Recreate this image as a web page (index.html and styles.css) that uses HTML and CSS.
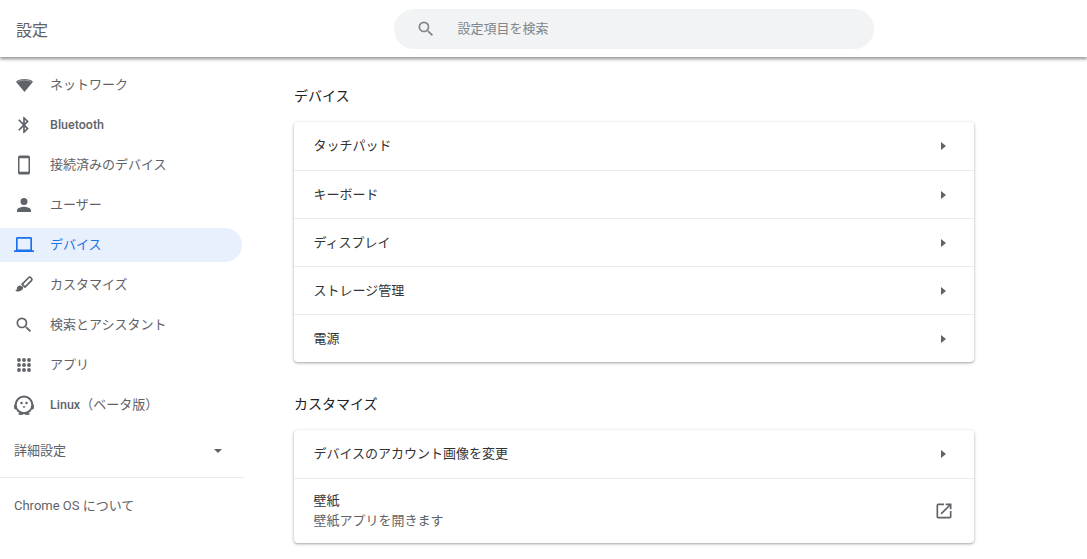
FILE: index.html
```html
<!DOCTYPE html>
<html lang="ja">
<head>
<meta charset="utf-8">
<title>設定</title>
<link rel="stylesheet" href="styles.css">
</head>
<body>
<header class="topbar">
  <h1 class="app-title">設定</h1>
  <div class="search">
    <svg class="search-icon" viewBox="0 0 24 24"><path d="M15.5 14h-.79l-.28-.27A6.47 6.47 0 0 0 16 9.5 6.5 6.5 0 1 0 9.5 16c1.61 0 3.09-.59 4.23-1.57l.27.28v.79l5 4.99L20.49 19l-4.99-5zm-6 0C7.01 14 5 11.99 5 9.5S7.01 5 9.5 5 14 7.01 14 9.5 11.99 14 9.500 14z"/></svg>
    <span class="search-text">設定項目を検索</span>
  </div>
</header>
<div class="layout">
  <nav class="sidebar">
    <a class="nav-item"><svg class="nav-icon" viewBox="0 0 24 24"><path d="M12.600 20.400 22.800 8C21 6 17 4.800 12.600 4.800S4.200 6 2.400 8z"/><path class="sheen" d="M4.500 8.200C6.500 6.900 9.500 6.200 12.600 6.200s6.100.7 8.100 2"/></svg><span>ネットワーク</span></a>
    <a class="nav-item"><svg class="nav-icon" viewBox="0 0 24 24"><path d="M17.710 7.710 12 2h-1v7.590L6.410 5 5 6.410 10.590 12 5 17.590 6.410 19 11 14.410V22h1l5.710-5.710-4.300-4.290 4.300-4.290zM13 5.830l1.880 1.880L13 9.590V5.830zm1.880 10.460L13 18.170v-3.760l1.880 1.880z"/></svg><span class="latin">Bluetooth</span></a>
    <a class="nav-item"><svg class="nav-icon" viewBox="0 0 24 24"><path fill-rule="evenodd" d="M7 .6h10a2.200 2.200 0 0 1 2.200 2.200v18.400a2.200 2.200 0 0 1-2.200 2.200H7a2.200 2.200 0 0 1-2.200-2.200V2.800A2.200 2.200 0 0 1 7 .6zM6.600 4v16h10.800V4z"/></svg><span>接続済みのデバイス</span></a>
    <a class="nav-item"><svg class="nav-icon" viewBox="0 0 24 24"><path d="M12 12a4.200 4.200 0 1 0 0-8.400 4.200 4.200 0 0 0 0 8.400zm0 2c-2.800 0-8.400 1.400-8.400 4.200v2.200h16.800v-2.200c0-2.800-5.600-4.200-8.400-4.200z"/></svg><span>ユーザー</span></a>
    <a class="nav-item active"><svg class="nav-icon" viewBox="0 0 24 24"><path fill-rule="evenodd" d="M4 2.400h16a1.600 1.600 0 0 1 1.600 1.600v14.400H24v2H0v-2h2.400V4A1.600 1.600 0 0 1 4 2.400zM4.400 4.400v13h15.200v-13z"/></svg><span>デバイス</span></a>
    <a class="nav-item"><svg class="nav-icon" viewBox="0 0 24 24"><path d="M7.500 12.500c-2.500 0-4 1.600-4 3.600 0 1.500-1.200 2.400-2.300 2.800 2 1 5 1.100 7 .1 2.200-1.100 3.300-3.400 2.700-5z"/><path class="outline" d="M9.800 11 17.500 3.300a2 2 0 0 1 2.800 0l.6.6a2 2 0 0 1 0 2.800l-7.700 7.700z"/></svg><span>カスタマイズ</span></a>
    <a class="nav-item"><svg class="nav-icon" viewBox="0 0 24 24"><path d="M15.500 14h-.79l-.28-.27A6.470 6.470 0 0 0 16 9.500 6.500 6.500 0 1 0 9.500 16c1.610 0 3.090-.59 4.230-1.570l.27.28v.79l5 4.990L20.490 19l-4.990-5zm-6 0C7.010 14 5 11.990 5 9.500S7.010 5 9.500 5 14 7.010 14 9.500 11.990 14 9.500 14z"/></svg><span>検索とアシスタント</span></a>
    <a class="nav-item"><svg class="nav-icon" viewBox="0 0 24 24"><circle cx="6" cy="6" r="2.300"/><circle cx="12" cy="6" r="2.300"/><circle cx="18" cy="6" r="2.300"/><circle cx="6" cy="12" r="2.300"/><circle cx="12" cy="12" r="2.300"/><circle cx="18" cy="12" r="2.300"/><circle cx="6" cy="18" r="2.300"/><circle cx="12" cy="18" r="2.300"/><circle cx="18" cy="18" r="2.300"/></svg><span>アプリ</span></a>
    <a class="nav-item"><svg class="nav-icon tux" viewBox="0 0 24 24"><ellipse cx="1.800" cy="14" rx="1.800" ry="3.400"/><ellipse cx="22.200" cy="14" rx="1.800" ry="3.400"/><ellipse cx="8" cy="22.800" rx="3" ry="1.300"/><ellipse cx="16" cy="22.800" rx="3" ry="1.300"/><circle class="ring" cx="12" cy="11.800" r="10"/><circle cx="9" cy="9.600" r="1.500"/><circle cx="15" cy="9.600" r="1.500"/><path d="M10 13.500h4l-2 2.300z"/></svg><span><span class="latin">Linux</span>（ベータ版）</span></a>
    <div class="advanced"><span>詳細設定</span><i class="caret"></i></div>
    <div class="about"><span class="about-latin">Chrome OS</span> について</div>
  </nav>
  <main class="content">
    <h2 class="section-title">デバイス</h2>
    <section class="card">
      <div class="row"><span>タッチパッド</span><i class="arrow"></i></div>
      <div class="row"><span>キーボード</span><i class="arrow"></i></div>
      <div class="row"><span>ディスプレイ</span><i class="arrow"></i></div>
      <div class="row"><span>ストレージ管理</span><i class="arrow"></i></div>
      <div class="row"><span>電源</span><i class="arrow"></i></div>
    </section>
    <h2 class="section-title next">カスタマイズ</h2>
    <section class="card">
      <div class="row"><span>デバイスのアカウント画像を変更</span><i class="arrow"></i></div>
      <div class="row tall">
        <div><div>壁紙</div><div class="sub">壁紙アプリを開きます</div></div>
        <svg class="external" viewBox="0 0 24 24"><path d="M19 19H5V5h7V3H5a2 2 0 0 0-2 2v14a2 2 0 0 0 2 2h14c1.100 0 2-.9 2-2v-7h-2v7zM14 3v2h3.590l-9.830 9.830 1.410 1.410L19 6.410V10h2V3h-7z"/></svg>
      </div>
    </section>
  </main>
</div>
</body>
</html>
```
FILE: styles.css
```css
* { box-sizing: border-box; }
html, body { height: 100%; }
body {
  margin: 0;
  height: 559px;
  overflow: hidden;
  background: #fff;
  font-family: Roboto, "Noto Sans CJK JP", sans-serif;
  font-size: 13px;
  line-height: 20px;
  color: #333;
}
.topbar {
  height: 57px;
  display: grid;
  grid-template-columns: 394px 480px;
  align-items: center;
  position: relative;
  z-index: 1;
  box-shadow: 0 2px 2px rgba(0,0,0,.2), 0 3px 3px rgba(0,0,0,.2);
}
.app-title {
  margin: 5px 0 0 16px;
  font-size: 16px;
  font-weight: 400;
  color: #5f6368;
}
.search {
  height: 40px;
  margin-top: 1px;
  border-radius: 20px;
  background: #f1f3f4;
  display: flex;
  align-items: center;
  padding-left: 22px;
  color: #80868b;
}
.search-icon { width: 20px; height: 20px; fill: #80868b; margin-right: 21.500px; }
.layout { display: flex; height: 502px; }
.sidebar { width: 244px; flex: none; padding-top: 11px; }
.nav-item {
  height: 34px;
  margin: 0 2px 6px 0;
  padding-left: 14px;
  display: flex;
  align-items: center;
  color: #5f6368;
  border-radius: 0 17px 17px 0;
}
.nav-icon { width: 20px; height: 20px; fill: #5f6368; margin-right: 16px; flex: none; overflow: visible; }
.sheen { fill: none; stroke: #fff; stroke-width: .7; opacity: .6; }
.outline { fill: none; stroke: #5f6368; stroke-width: 2; }
.ring { fill: #fff; stroke: #5f6368; stroke-width: 2.400; }
.latin { font-weight: 500; font-size: 12.500px; }
.about-latin { font-size: 13px; }
.active { background: #e8f0fe; color: #1a73e8; }
.active .nav-icon { fill: #1a73e8; }
.advanced {
  height: 34px;
  margin-top: 12px;
  padding: 0 22px 0 14px;
  display: flex;
  align-items: center;
  justify-content: space-between;
  color: #5f6368;
}
.caret {
  width: 0; height: 0;
  border-left: 4.500px solid transparent;
  border-right: 4.500px solid transparent;
  border-top: 4.500px solid #5f6368;
}
.about {
  margin-top: 9px;
  border-top: 1px solid #e8eaed;
  padding: 18px 0 0 14px;
  color: #5f6368;
}
.content { flex: 1; padding: 29px 0 0 50px; }
.section-title {
  margin: 0 0 16px;
  font-size: 14px;
  line-height: 20px;
  font-weight: 400;
  color: #202124;
}
.next { margin-top: 32px; }
.card {
  width: 680px;
  background: #fff;
  border-radius: 4px;
  box-shadow: 0 1px 2px rgba(60,64,67,.3), 0 1px 3px 1px rgba(60,64,67,.15);
}
.row {
  height: 48px;
  padding: 0 28px 0 19.500px;
  display: flex;
  align-items: center;
  justify-content: space-between;
  border-top: 1px solid #e8eaed;
}
.row:first-child { border-top: 0; }
.tall { height: 65px; padding-right: 20px; }
.sub { color: #5f6368; }
.arrow {
  width: 0; height: 0;
  border-top: 4.500px solid transparent;
  border-bottom: 4.500px solid transparent;
  border-left: 5px solid #5f6368;
}
.external { width: 20px; height: 20px; fill: #5f6368; }
```
